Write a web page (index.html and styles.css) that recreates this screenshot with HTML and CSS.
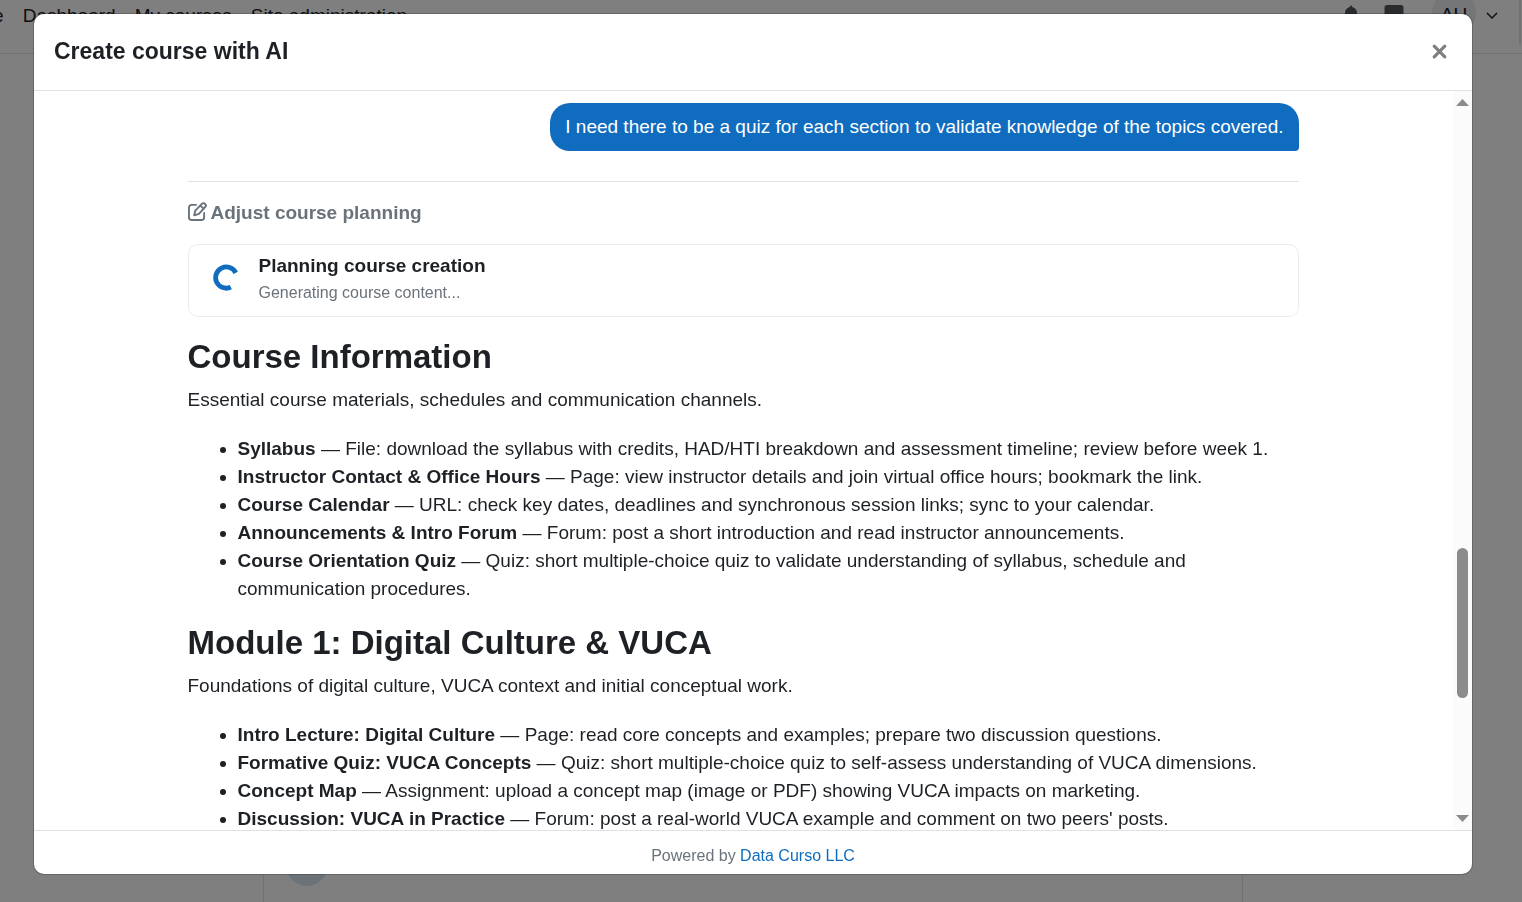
FILE: index.html
```html
<!DOCTYPE html>
<html lang="en">
<head>
<meta charset="utf-8">
<title>Create course with AI</title>
<link rel="stylesheet" href="styles.css">
</head>
<body>
<div class="page" aria-hidden="true">
  <header class="navbar">
    <nav class="nav-links">
      <a href="#">Home</a>
      <a href="#">Dashboard</a>
      <a href="#">My courses</a>
      <a href="#">Site administration</a>
    </nav>
    <div class="nav-tools">
      <svg class="nav-icon" viewBox="0 0 20 20"><path d="M10 1 8.600 3C5.500 4 4 6 4 9c0 4-1 5-2 6h16c-1-1-2-2-2-6 0-3-1.500-5-4.600-6z"/></svg>
      <svg class="nav-icon" viewBox="0 0 20 20"><path d="M3 1h14q2.500 0 2.500 2.500V13q0 2.500-2.500 2.500h-5L7 19v-3.500H3Q.5 15.500.5 13V3.500Q.5 1 3 1z"/></svg>
      <span class="avatar">AU</span>
      <svg class="chevron" viewBox="0 0 12 8"><path d="M1 1l5 5 5-5" fill="none" stroke="currentColor" stroke-width="1.500"/></svg>
    </div>
  </header>
  <main class="page-main"><span class="activity-dot"></span></main>
</div>
<div class="backdrop">
  <section class="modal" role="dialog" aria-modal="true" aria-labelledby="modal-title">
    <header class="modal-header">
      <h1 class="modal-title" id="modal-title">Create course with AI</h1>
      <button class="close" type="button" aria-label="Close">
        <svg viewBox="0 0 16 16"><path d="M3 3l10 10M13 3 3 13"/></svg>
      </button>
    </header>
    <div class="modal-body">
      <div class="scroll-area">
        <div class="conversation">
          <p class="bubble">I need there to be a quiz for each section to validate knowledge of the topics covered.</p>
          <hr class="divider">
          <h2 class="step-title">
            <svg class="edit-icon" viewBox="0 0 20 20"><path d="M8.500 3H4Q1 3 1 6v10Q1 19 4 19h10Q17 19 17 16v-4.500M6.500 14l1.200-5L14.500 2q1.800-1.600 3.500 0t0 3.500L11.500 12.500zM13 3.800l3.500 3.500"/></svg>
            Adjust course planning
          </h2>
          <div class="status" role="status">
            <svg class="spinner" viewBox="0 0 28 28"><path d="M23.600 9.200A11 11 0 1 0 18.500 24"/></svg>
            <div>
              <p class="status-title">Planning course creation</p>
              <p class="status-text">Generating course content...</p>
            </div>
          </div>
          <article class="plan">
            <h2>Course Information</h2>
            <p>Essential course materials, schedules and communication channels.</p>
            <ul>
              <li><strong>Syllabus</strong> — File: download the syllabus with credits, HAD/HTI breakdown and assessment timeline; review before week 1.</li>
              <li><strong>Instructor Contact &amp; Office Hours</strong> — Page: view instructor details and join virtual office hours; bookmark the link.</li>
              <li><strong>Course Calendar</strong> — URL: check key dates, deadlines and synchronous session links; sync to your calendar.</li>
              <li><strong>Announcements &amp; Intro Forum</strong> — Forum: post a short introduction and read instructor announcements.</li>
              <li><strong>Course Orientation Quiz</strong> — Quiz: short multiple-choice quiz to validate understanding of syllabus, schedule and communication procedures.</li>
            </ul>
            <h2>Module 1: Digital Culture &amp; VUCA</h2>
            <p>Foundations of digital culture, VUCA context and initial conceptual work.</p>
            <ul>
              <li><strong>Intro Lecture: Digital Culture</strong> — Page: read core concepts and examples; prepare two discussion questions.</li>
              <li><strong>Formative Quiz: VUCA Concepts</strong> — Quiz: short multiple-choice quiz to self-assess understanding of VUCA dimensions.</li>
              <li><strong>Concept Map</strong> — Assignment: upload a concept map (image or PDF) showing VUCA impacts on marketing.</li>
              <li><strong>Discussion: VUCA in Practice</strong> — Forum: post a real-world VUCA example and comment on two peers' posts.</li>
            </ul>
          </article>
        </div>
      </div>
      <div class="scrollbar" aria-hidden="true">
        <svg class="arrow" viewBox="0 0 13 7"><path d="M6.500 0 13 7H0z"/></svg>
        <span class="space-before"></span>
        <span class="thumb"></span>
        <span class="space-after"></span>
        <svg class="arrow" viewBox="0 0 13 7"><path d="M0 0h13L6.500 7z"/></svg>
      </div>
    </div>
    <footer class="modal-footer">Powered by <a href="#">Data Curso LLC</a></footer>
  </section>
</div>
</body>
</html>
```
FILE: styles.css
```css
* { box-sizing: border-box; }
html, body { height: 100%; }
body {
  margin: 0;
  overflow: hidden;
  font-family: "Liberation Sans", Arial, sans-serif;
  font-size: 19px;
  line-height: 28px;
  color: #1d2125;
  background: #fff;
}
h1, h2, p, ul { margin: 0; }

.page { height: 100%; display: flex; flex-direction: column; }
.navbar {
  flex: none;
  display: flex;
  justify-content: space-between;
  height: 54px;
  border-bottom: 1px solid #dee2e6;
}
.nav-links { display: flex; gap: 19px; margin-left: -47px; padding-top: 2px; }
.nav-links a { color: #1d2125; text-decoration: none; }
.nav-tools {
  display: flex;
  align-items: flex-start;
  gap: 23px;
  padding-right: 1px;
}
.nav-tools::after { content: ""; width: 2px; height: 44px; background: #dee2e6; margin-left: -2px; }
.nav-icon { width: 20px; height: 20px; margin-top: 4px; fill: #53585d; }
.avatar {
  width: 44px;
  height: 44px;
  margin: -9px -13px 0 5px;
  border-radius: 50%;
  background: #e9ecef;
  line-height: 47px;
  text-align: center;
}
.chevron { width: 12px; height: 8px; margin-top: 12px; }
.page-main {
  flex: 1;
  display: flex;
  align-items: flex-end;
  margin: 0 279px 0 263px;
  padding: 0 22px 16px;
  border: solid #dee2e6;
  border-width: 0 1px;
}
.activity-dot { width: 42px; height: 42px; border-radius: 50%; background: #d8e6f0; }

.backdrop {
  position: fixed;
  inset: 0;
  display: flex;
  padding: 14px 50px 28px 34px;
  background: rgba(0, 0, 0, 0.5);
}
.modal {
  flex: 1;
  display: flex;
  flex-direction: column;
  min-width: 0;
  border-radius: 10px;
  overflow: hidden;
  background: #fff;
  box-shadow: 0 0 0 1px rgba(0, 0, 0, 0.2);
}
.modal-header {
  flex: none;
  display: flex;
  align-items: center;
  justify-content: space-between;
  height: 77px;
  padding: 0 24px 2px 20px;
  border-bottom: 1px solid #dee2e6;
}
.modal-title { font-size: 23px; line-height: 35px; }
.close { display: flex; padding: 0; border: 0; background: none; cursor: pointer; }
.close svg {
  width: 17px;
  height: 17px;
  stroke: #7f7f7f;
  stroke-width: 3;
  stroke-linecap: round;
}
.modal-body { flex: 1; display: flex; min-height: 0; }
.scroll-area { flex: 1; min-width: 0; overflow: hidden; padding: 12px 25px 0 24px; }
.conversation { display: flex; flex-direction: column; max-width: 1111px; margin: 0 auto; }
.bubble {
  align-self: flex-end;
  padding: 10px 15px;
  border-radius: 20px 20px 4px 20px;
  background: #0f6cbf;
  color: #fff;
}
.divider { width: 100%; margin: 30px 0 17px; border: 0; border-top: 1px solid #dee2e6; }
.step-title {
  display: flex;
  align-items: center;
  gap: 4px;
  font-size: 19px;
  color: #6a737b;
}
.edit-icon { width: 19px; height: 19px; margin-bottom: 3px; overflow: visible; fill: none; stroke: currentColor; stroke-width: 2; stroke-linejoin: round; stroke-linecap: round; }
.status {
  display: flex;
  align-items: center;
  gap: 19px;
  margin-top: 17px;
  padding: 7px 24px 10px;
  border: 1px solid #e9ecef;
  border-radius: 10px;
}
.spinner { width: 27px; height: 27px; margin-bottom: 4px; fill: none; stroke: #0f6cbf; stroke-width: 5; }
.status-title { font-weight: bold; }
.status-text { font-size: 16px; line-height: 26px; color: #6a737b; }
.plan h2 { margin: 20px 0 9px; font-size: 33px; line-height: 40px; }
.plan ul { margin-top: 21px; padding-left: 50px; }

.scrollbar {
  flex: none;
  display: flex;
  flex-direction: column;
  align-items: center;
  width: 19px;
  padding: 8px 0;
  background: #fbfbfb;
}
.arrow { width: 13px; height: 7px; fill: #8b8b8b; }
.space-before { flex: 442; }
.thumb { flex: 150; width: 11px; border-radius: 6px; background: #8b8b8b; }
.space-after { flex: 117; }
.modal-footer {
  flex: none;
  padding: 11px 0 4px;
  border-top: 1px solid #dee2e6;
  font-size: 16px;
  text-align: center;
  color: #6a737b;
}
.modal-footer a { color: #0f6cbf; text-decoration: none; }
```
